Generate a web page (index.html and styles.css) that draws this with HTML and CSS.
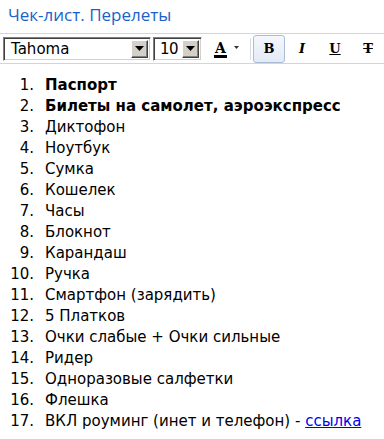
FILE: index.html
```html
<!DOCTYPE html>
<html>
<head>
<meta charset="utf-8">
<link rel="stylesheet" href="styles.css">
</head>
<body>
<div class="page">
  <div class="title">Чек-лист. Перелеты</div>
  <div class="toolbar">
    <div class="select font-select">
      <span class="select-value">Tahoma</span>
      <span class="select-btn"><svg width="9" height="5" viewBox="0 0 9 5"><path d="M0 0h9L4.5 5z" fill="#000"/></svg></span>
    </div>
    <div class="select size-select">
      <span class="select-value">10</span>
      <span class="select-btn"><svg width="9" height="5" viewBox="0 0 9 5"><path d="M0 0h9L4.5 5z" fill="#000"/></svg></span>
    </div>
    <div class="tool color-tool">
      <span class="color-a">A</span>
      <svg class="mini-arrow" width="5" height="3" viewBox="0 0 5 3"><path d="M0 0h5L2.5 3z" fill="#333"/></svg>
    </div>
    <div class="sep"></div>
    <div class="tool fmt active"><span class="b">B</span></div>
    <div class="tool fmt"><span class="i">I</span></div>
    <div class="tool fmt"><span class="u">U</span></div>
    <div class="tool fmt"><span class="s">T</span></div>
  </div>
  <ol class="list">
    <li><span class="txt"><b>Паспорт</b></span></li>
    <li><span class="txt"><b>Билеты на самолет, аэроэкспресс</b></span></li>
    <li><span class="txt">Диктофон</span></li>
    <li><span class="txt">Ноутбук</span></li>
    <li><span class="txt">Сумка</span></li>
    <li><span class="txt">Кошелек</span></li>
    <li><span class="txt">Часы</span></li>
    <li><span class="txt">Блокнот</span></li>
    <li><span class="txt">Карандаш</span></li>
    <li><span class="txt">Ручка</span></li>
    <li><span class="txt">Смартфон (зарядить)</span></li>
    <li><span class="txt">5 Платков</span></li>
    <li><span class="txt">Очки слабые + Очки сильные</span></li>
    <li><span class="txt">Ридер</span></li>
    <li><span class="txt">Одноразовые салфетки</span></li>
    <li><span class="txt">Флешка</span></li>
    <li><span class="txt">ВКЛ роуминг (инет и телефон) - <a href="#">ссылка</a></span></li>
  </ol>
</div>
</body>
</html>
```
FILE: styles.css
```css
* { box-sizing: border-box; }
html, body { margin: 0; padding: 0; background: #fff; }
body { width: 384px; height: 439px; overflow: hidden; font-family: "DejaVu Sans", sans-serif; }
.page { display: flex; flex-direction: column; }
.title {
  height: 33px;
  padding: 3px 0 0 8px;
  font-family: "Open Sans", "Noto Sans", sans-serif;
  font-size: 17px;
  color: #1a62c9;
  line-height: 24px;
}
.toolbar {
  height: 31px;
  border-top: 1px solid #c9d7ea;
  border-bottom: 1px solid #c9d7ea;
  display: flex;
  align-items: center;
  padding: 0 0 0 3px;
}
.toolbar > * { flex-shrink: 0; }
.select {
  height: 24px;
  display: flex;
  border-top: 1px solid #808080;
  border-left: 1px solid #808080;
  border-right: 1px solid #fff;
  border-bottom: 1px solid #fff;
  box-shadow: inset 1px 1px 0 #404040, inset -1px -1px 0 #d4d0c8;
  background: #fff;
  padding: 2px;
}
.font-select { width: 148px; }
.size-select { width: 49px; margin-left: 2px; }
.select-value {
  flex: 1;
  font-family: "DejaVu Sans", sans-serif;
  font-size: 15px;
  line-height: 18px;
  padding-left: 5px;
  color: #000;
  white-space: nowrap;
}
.size-select .select-value { padding-left: 4px; letter-spacing: -0.5px; }
.select-btn {
  width: 17px;
  height: 18px;
  flex-shrink: 0;
  background: #d4d0c8;
  border-top: 1px solid #fff;
  border-left: 1px solid #fff;
  border-right: 1px solid #404040;
  border-bottom: 1px solid #404040;
  box-shadow: inset -1px -1px 0 #808080;
  display: flex;
  align-items: center;
  justify-content: center;
}
.tool {
  height: 28px;
  display: flex;
  align-items: center;
  justify-content: center;
}
.color-tool { width: 46px; justify-content: flex-start; padding-left: 12px; gap: 7px; }
.color-a {
  font-family: "DejaVu Serif", serif;
  font-weight: bold;
  font-size: 14px;
  line-height: 13px;
  border-bottom: 3px solid #000;
  padding: 0 1px;
  margin-top: 2px;
}
.mini-arrow { margin-top: -3px; }
.sep { width: 1px; height: 22px; background: #d5dde8; margin: 0 2px 0 2px; }
.fmt { width: 32px; margin-right: 1px; font-family: "DejaVu Serif", serif; font-weight: bold; font-size: 13px; color: #000; }
.fmt.active {
  height: 28px;
  border: 1px solid #a9bdd6;
  border-radius: 3px;
  background: linear-gradient(#f4f7fc, #e3ebf6);
}
.fmt .i { font-style: italic; }
.fmt .u { text-decoration: underline; }
.fmt .s { text-decoration: line-through; }
.list {
  list-style: none;
  counter-reset: item;
  margin: 11px 0 0 0;
  padding: 0;
  font-size: 15px;
  line-height: 21px;
  color: #000;
}
.list li {
  counter-increment: item;
  display: flex;
  gap: 11px;
}
.list li::before {
  content: counter(item) ".";
  width: 34px;
  text-align: right;
  flex-shrink: 0;
}
.txt { white-space: nowrap; }
.list a { color: #0000ee; text-decoration: underline; }
```
